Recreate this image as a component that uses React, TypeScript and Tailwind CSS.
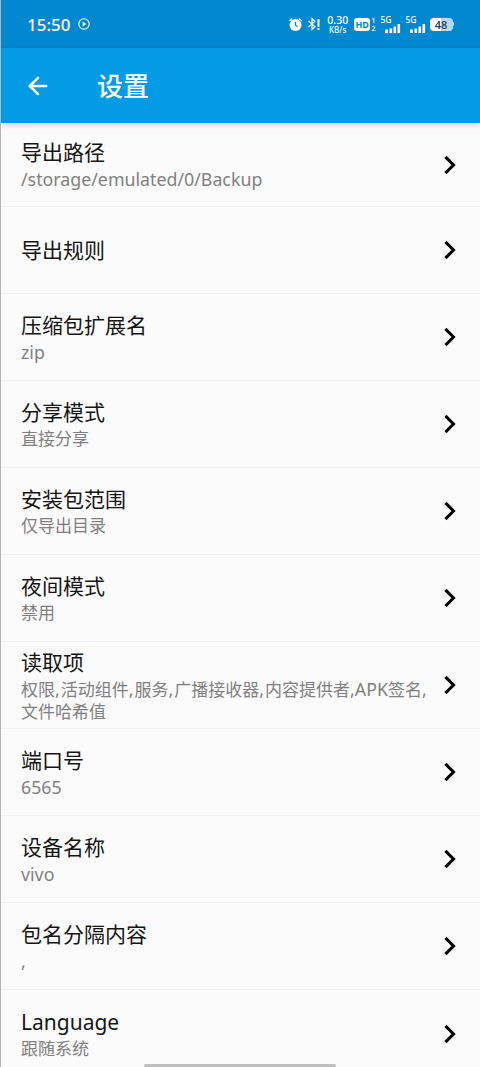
import { ArrowLeft, ChevronRight } from "lucide-react"

const rows = [
  { title: "导出路径", sub: "/storage/emulated/0/Backup", h: "h-[84px]" },
  { title: "导出规则", sub: "", h: "h-[87px]" },
  { title: "压缩包扩展名", sub: "zip", h: "h-[87px]" },
  { title: "分享模式", sub: "直接分享", h: "h-[87px]" },
  { title: "安装包范围", sub: "仅导出目录", h: "h-[87px]" },
  { title: "夜间模式", sub: "禁用", h: "h-[87px]" },
  { title: "读取项", sub: "权限,活动组件,服务,广播接收器,内容提供者,APK签名,文件哈希值", h: "h-[87px]" },
  { title: "端口号", sub: "6565", h: "h-[87px]" },
  { title: "设备名称", sub: "vivo", h: "h-[87px]" },
  { title: "包名分隔内容", sub: ",", h: "h-[87px]" },
  { title: "Language", sub: "跟随系统", h: "h-[87px]" },
]

function SignalBars() {
  return (
    <svg width="20" height="9" viewBox="0 0 20 9" fill="white">
      <rect x="4" y="5.5" width="3" height="3.5" />
      <rect x="8.5" y="4.5" width="2.6" height="4.5" />
      <rect x="12.5" y="2.5" width="2.6" height="6.5" />
      <rect x="16.5" y="0" width="2.6" height="9" />
    </svg>
  )
}

function StatusBar() {
  return (
    <div className="flex h-[48px] items-center justify-between bg-[#0288d1] pl-[26px] pr-[26px] text-white">
      <div className="flex items-center gap-[7px]">
        <span className="text-[17px] font-medium leading-none">15:50</span>
        <svg width="12" height="12" viewBox="0 0 12 12" fill="none" stroke="white" strokeWidth="1.1">
          <circle cx="6" cy="6" r="5.2" />
          <path d="M4.7 3.6 8.2 6 4.7 8.4Z" fill="white" stroke="none" />
        </svg>
      </div>
      <div className="flex items-center">
        <svg width="15" height="15" viewBox="0 0 14 14" fill="white">
          <circle cx="7" cy="7.5" r="5.6" />
          <path d="M1 3.2 3.4 1l.8.9L1.8 4.1ZM13 3.2 10.6 1l-.8.9 2.4 2.2Z" />
          <path d="M7 4.5v3.2l2 1.2" fill="none" stroke="#0288d1" strokeWidth="1.1" />
        </svg>
        <svg className="ml-[4px]" width="14" height="14" viewBox="0 0 14 14" fill="none" stroke="white" strokeWidth="1.2">
          <path d="M1.5 4 8 9.8 5 12.5V1.5L8 4.2 1.5 10" />
          <rect x="10.5" y="2" width="2" height="8" fill="white" stroke="none" />
          <rect x="10.5" y="11" width="2" height="2" fill="white" stroke="none" />
        </svg>
        <div className="ml-[5px] flex w-[23px] flex-col items-center font-medium">
          <span className="text-[10.5px] leading-[10px]">0.30</span>
          <span className="text-[8px] leading-[9px]">KB/s</span>
        </div>
        <div className="ml-[5px] flex h-[13px] w-[16px] items-center justify-center rounded-[3px] bg-white text-[9px] font-bold leading-none text-[#0288d1]">
          HD
        </div>
        <div className="ml-[1px] flex flex-col text-[7.5px] font-medium leading-[8px]">
          <span>1</span>
          <span>2</span>
        </div>
        <div className="ml-[5px] flex w-[20px] flex-col text-[8.5px] font-medium leading-[8px]">
          <span>5G</span>
          <SignalBars />
        </div>
        <div className="ml-[5px] flex w-[20px] flex-col text-[8.5px] font-medium leading-[8px]">
          <span>5G</span>
          <SignalBars />
        </div>
        <div className="ml-[4px] flex items-center">
          <div className="flex h-[13px] w-[23px] items-center justify-center rounded-[4px] bg-[linear-gradient(90deg,#ffffff_0%,#ffffff_48%,#b3dcf3_48%,#b3dcf3_100%)] text-[11px] font-semibold leading-none text-[#37474f]">
            48
          </div>
          <div className="h-[4px] w-[1.5px] rounded-r-sm bg-[#b3dcf3]" />
        </div>
      </div>
    </div>
  )
}

// latin runs sit a bit larger than the cjk ones in the reference
function SubText({ text }: { text: string }) {
  const parts = text.match(/[\x00-\x7f]+|[^\x00-\x7f]+/g) ?? []
  return (
    <>
      {parts.map((p, i) =>
        /^[\x00-\x7f]/.test(p) ? (
          <span key={i} className={`text-[17.8px] ${p.endsWith(",") ? "pr-[1px]" : ""}`}>
            {p}
          </span>
        ) : (
          <span key={i}>{p}</span>
        ),
      )}
    </>
  )
}

function Row({ title, sub, h, last }: { title: string; sub: string; h: string; last: boolean }) {
  return (
    <div className={`flex ${h} shrink-0 items-center pl-[20px] pr-[20px] ${last ? "" : "border-b border-[#f0f0f0]"}`}>
      <div className="min-w-0 flex-1 pt-[1px]">
        <div className="text-[21px] leading-[27px] text-[#151515]">{title}</div>
        {sub && (
          <div className="mt-[2px] text-[17px] leading-[22px] text-[#808080]">
            <SubText text={sub} />
          </div>
        )}
      </div>
      <ChevronRight className="ml-[2px] h-[28px] w-[28px] shrink-0 translate-x-[4px] text-black" strokeWidth={2.6} strokeLinecap="square" strokeLinejoin="miter" />
    </div>
  )
}

export default function App() {
  return (
    <div
      className="relative h-[1067px] w-[480px] overflow-hidden border-l border-[#b5b5b5] bg-[#fbfbfb]"
      style={{ fontFamily: '"Noto Sans", "Noto Sans CJK SC", sans-serif' }}
    >
      <StatusBar />
      <header className="flex h-[75px] items-center bg-[#039be5] pl-[23px] text-white shadow-[0_2px_6px_rgba(0,0,0,0.18)]">
        <ArrowLeft className="h-[28px] w-[28px]" strokeWidth={2.2} />
        <h1 className="ml-[45px] text-[26px] font-medium leading-none">设置</h1>
      </header>
      <div className="flex flex-col">
        {rows.map((r, i) => (
          <Row key={r.title} title={r.title} sub={r.sub} h={r.h} last={i === rows.length - 1} />
        ))}
      </div>
      <div className="absolute bottom-0 left-[143px] h-[3px] w-[192px] rounded-full bg-[#bdbdbd]" />
    </div>
  )
}
